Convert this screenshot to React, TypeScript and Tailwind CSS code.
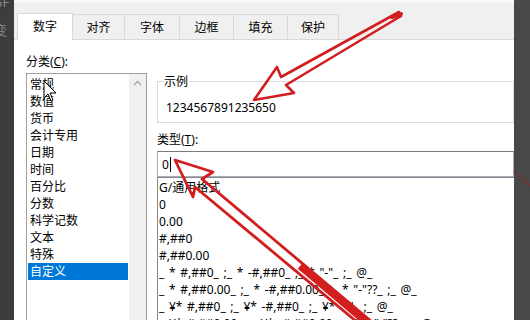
import React from "react";

const font = { fontFamily: '"Noto Sans","Noto Sans CJK SC",sans-serif' };

const categories = ["常规", "数值", "货币", "会计专用", "日期", "时间", "百分比", "分数", "科学记数", "文本", "特殊", "自定义"];
const types = [
  "G/通用格式",
  "0",
  "0.00",
  "#,##0",
  "#,##0.00",
  '_ * #,##0_ ;_ * -#,##0_ ;_ * "-"_ ;_ @_',
  '_ * #,##0.00_ ;_ * -#,##0.00_ ;_ * "-"??_ ;_ @_',
  '_ ¥* #,##0_ ;_ ¥* -#,##0_ ;_ ¥* "-"_ ;_ @_',
  '_ ¥* #,##0.00_ ;_ ¥* -#,##0.00_ ;_ ¥* "-"??_ ;_ @_',
];

const tabs = [
  { t: "对齐", w: "w-[52px]" },
  { t: "字体", w: "w-[55px]" },
  { t: "边框", w: "w-[54px]" },
  { t: "填充", w: "w-[54px]" },
  { t: "保护", w: "w-[51px]" },
];

export default function App() {
  return (
    <div className="relative flex w-[530px] h-[320px] overflow-hidden text-[12px] leading-[17px] text-black" style={font}>
      <div className="w-[14px] shrink-0 bg-[#3d3d3d] overflow-hidden text-[#8a8a8a] text-[13px]">
        <div className="-ml-[5px] leading-[12px] -mt-[4px]">5F</div>
        <div className="-ml-[6px] mt-[14px]">变</div>
      </div>
      <div className="flex-1 flex flex-col bg-white min-w-0">
        <div className="h-[40px] shrink-0 bg-[#f0f0f0] border-t-[3px] border-t-[#f8f8f8] border-b border-b-[#d9d9d9] flex items-end pl-[3px]">
          <div className="w-[56px] h-[27px] -mb-px bg-white border border-b-0 border-[#d9d9d9] flex items-center justify-center pb-[1px]">数字</div>
          {tabs.map((x) => (
            <div key={x.t} className={`${x.w} h-[25px] border-t border-r border-[#d9d9d9] flex items-center justify-center`}>
              {x.t}
            </div>
          ))}
        </div>
        <div className="flex-1 flex pl-[12px] gap-[10px] min-h-0 overflow-hidden">
          <div className="w-[121px] shrink-0 flex flex-col">
            <div className="mt-[13px] shrink-0">
              分类(<span className="underline">C</span>):
            </div>
            <div className="mt-[3px] h-[260px] shrink-0 border border-[#a0a0a0] flex">
              <div className="flex-1 flex flex-col pt-[2px]">
                {categories.map((c, i) => (
                  <div
                    key={c}
                    className={i === categories.length - 1 ? "mx-[1px] pl-[2px] bg-[#0078d7] text-white" : "mx-[1px] pl-[2px]"}
                  >
                    {c}
                  </div>
                ))}
              </div>
              <div className="w-[17px] bg-[#f0f0f0] flex justify-center pt-[6px]">
                <svg width="9" height="6" viewBox="0 0 9 6">
                  <path d="M1 5 L4.5 1.5 L8 5" fill="none" stroke="#a6a6a6" strokeWidth="1.3" />
                </svg>
              </div>
            </div>
          </div>
          <div className="flex-1 flex flex-col min-w-0">
            <div className="relative mt-[41px] h-[42px] shrink-0 border border-[#dcdcdc]">
              <div className="absolute -top-[9px] left-[5px] bg-white px-[1px]">示例</div>
              <div className="pl-[8px] pt-[17px]">1234567891235650</div>
            </div>
            <div className="mt-[8px] shrink-0">
              类型(<span className="underline">T</span>):
            </div>
            <div className="mt-[3px] h-[26px] shrink-0 border border-[#abadb3] border-t-[#7a7a7a] flex items-center pl-[4px]">
              <span>0</span>
              <span className="ml-[1px] w-px h-[15px] bg-black" />
            </div>
            <div className="shrink-0 h-[200px] border-l border-t border-[#828790] pl-[1px] pt-[1px] whitespace-pre [word-spacing:1.5px]">
              {types.map((t) => (
                <div key={t}>{t}</div>
              ))}
            </div>
          </div>
        </div>
      </div>
      <div className="w-[16px] shrink-0 bg-[#484848]" />

      <svg className="absolute inset-0 pointer-events-none" width="530" height="320" viewBox="0 0 530 320">
        <path d="M44 81 L44 98 L48 94 L51 101 L53 100 L50 93 L56 93 Z" fill="#ffffff" stroke="#000" strokeWidth="1" strokeLinejoin="round" />
        <path
          d="M399 12 L281 77 L277 67 L254 100 L294 93 L286 85 L401 16 Z"
          fill="none"
          stroke="#d21e1e"
          strokeWidth="2.6"
          strokeLinejoin="round"
        />
        <path d="M392 17 L401 14" stroke="#d21e1e" strokeWidth="4" strokeLinecap="round" />
        <path
          d="M175 160 L213 172 L202 179 L372 322 L357 322 L195 187 L193 197 Z"
          fill="none"
          stroke="#d21e1e"
          strokeWidth="2.8"
          strokeLinejoin="round"
        />
        <path d="M300 266 L366 322" stroke="#d21e1e" strokeWidth="7" />
        <path d="M514 171 L530 186" stroke="#6e3636" strokeWidth="2" />
      </svg>
    </div>
  );
}
